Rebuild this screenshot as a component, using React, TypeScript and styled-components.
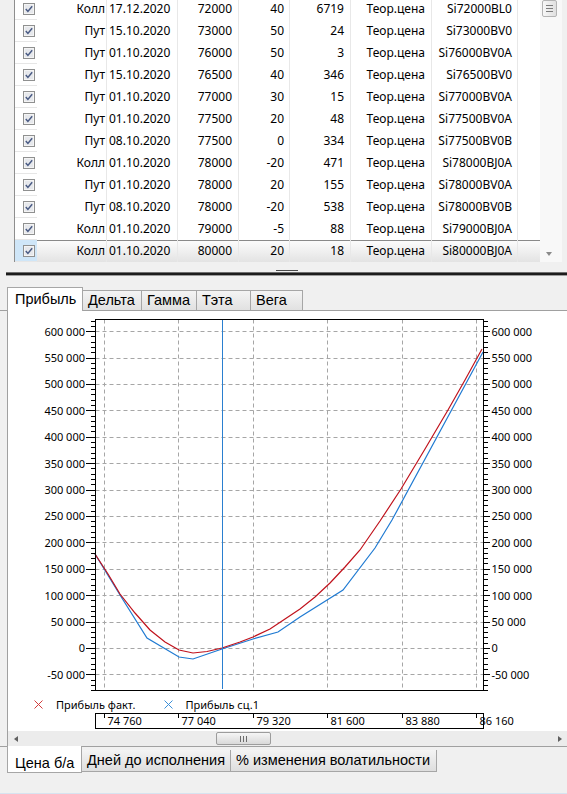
import React from "react";
import styled, { createGlobalStyle, css } from "styled-components";

type Leg = {
  kind: string;
  date: string;
  strike: number;
  qty: number;
  price: number;
  code: string;
};

const legs: Leg[] = [
  { kind: "Колл", date: "17.12.2020", strike: 72000, qty: 40, price: 6719, code: "Si72000BL0" },
  { kind: "Пут", date: "15.10.2020", strike: 73000, qty: 50, price: 24, code: "Si73000BV0" },
  { kind: "Пут", date: "01.10.2020", strike: 76000, qty: 50, price: 3, code: "Si76000BV0A" },
  { kind: "Пут", date: "15.10.2020", strike: 76500, qty: 40, price: 346, code: "Si76500BV0" },
  { kind: "Пут", date: "01.10.2020", strike: 77000, qty: 30, price: 15, code: "Si77000BV0A" },
  { kind: "Пут", date: "01.10.2020", strike: 77500, qty: 20, price: 48, code: "Si77500BV0A" },
  { kind: "Пут", date: "08.10.2020", strike: 77500, qty: 0, price: 334, code: "Si77500BV0B" },
  { kind: "Колл", date: "01.10.2020", strike: 78000, qty: -20, price: 471, code: "Si78000BJ0A" },
  { kind: "Пут", date: "01.10.2020", strike: 78000, qty: 20, price: 155, code: "Si78000BV0A" },
  { kind: "Пут", date: "08.10.2020", strike: 78000, qty: -20, price: 538, code: "Si78000BV0B" },
  { kind: "Колл", date: "01.10.2020", strike: 79000, qty: -5, price: 88, code: "Si79000BJ0A" },
  { kind: "Колл", date: "01.10.2020", strike: 80000, qty: 20, price: 18, code: "Si80000BJ0A" },
];
const SELECTED = 11;

const topTabs = [
  { label: "Прибыль", w: 76 },
  { label: "Дельта", w: 60 },
  { label: "Гамма", w: 56 },
  { label: "Тэта", w: 55 },
  { label: "Вега", w: 53 },
];

const bottomTabs = [
  { label: "Цена б/а", w: 75 },
  { label: "Дней до исполнения", w: 150 },
  { label: "% изменения волатильности", w: 207 },
];

// chart scales (page pixels)
const yOf = (v: number) => 648.4 - (v * 26.4) / 50000;
const xOf = (p: number) => 104.5 + ((p - 74760) * 74.45) / 2280;
const crisp = (n: number) => Math.floor(n) + 0.5;
const PLOT = { l: 95.5, r: 483.5, t: 319.5, b: 690.5 };

const fmt = (v: number) =>
  (v < 0 ? "-" : "") + String(Math.abs(v)).replace(/\B(?=(\d{3})+(?!\d))/g, " ");

const levels = Array.from({ length: 14 }, (_, i) => -50000 + i * 50000);
const ticks = Array.from({ length: 71 }, (_, i) => -80000 + i * 10000).filter(
  (v) => yOf(v) >= 319 && yOf(v) <= 691
);
const prices = Array.from({ length: 6 }, (_, i) => 74760 + i * 2280);

// traced from the plot
const factCurve =
  "95,554 108,574 120,594 135,613 150,630 165,642 179,650 193,653 207,651.5 222,648 240,642 253,637 270,629 285,619 300,609 315,597 330,583 345,567 360,550 380,521 401,489 425,449 448,410 465,380 482,349";
const scenarioCurve =
  "95,554 120,595 147,638 179,657 193,659 222,649 253,639 278,632 300,617 343,590 375,548 392,520 483,352";

const GlobalStyle = createGlobalStyle`
  html, body {
    margin: 0;
    padding: 0;
    background: #f0f0f0;
  }
  body {
    width: 567px;
    height: 794px;
    overflow: hidden;
    font-family: "Liberation Sans", Arial, sans-serif;
    color: #000;
  }
`;

const Window = styled.div`
  display: flex;
  flex-direction: column;
  width: 567px;
  height: 794px;
  overflow: hidden;
  background: #f0f0f0;
`;

const GridArea = styled.div`
  display: flex;
  height: 262px;
  padding-left: 14px;
`;

const Grid = styled.div`
  width: 525px;
  border-left: 1px solid #8e8e8e;
  background: #fff;
  overflow: hidden;
  font-family: "Noto Sans", "Liberation Sans", sans-serif;
  font-size: 12px;
`;

const Rows = styled.div`
  margin-top: -2px;
`;

const Row = styled.div<{ $selected?: boolean }>`
  display: grid;
  grid-template-columns: 22px 70px 71px 61px 51px 61px 81px 86px 22px;
  height: 22px;
  ${(p) =>
    p.$selected &&
    css`
      background: linear-gradient(#8a8a8a, #8a8a8a) top / 100% 1px no-repeat,
        linear-gradient(#fdfdfd, #e3e3e3);
    `}
`;

const CheckCell = styled.div<{ $selected?: boolean }>`
  display: flex;
  align-items: center;
  padding-left: 8px;
  box-sizing: border-box;
  border-bottom: 1px solid #e6e6e6;
  background: ${(p) => (p.$selected ? "#cfe6f8" : "#fff")};
`;

const Cell = styled.div<{ $left?: boolean; $pad?: number }>`
  display: flex;
  align-items: center;
  justify-content: ${(p) => (p.$left ? "flex-start" : "flex-end")};
  padding: ${(p) => (p.$left ? `0 0 0 ${p.$pad ?? 2}px` : `0 ${p.$pad ?? 6}px 0 0`)};
  border-right: 1px solid #e8e8e8;
  white-space: nowrap;
  line-height: 22px;
`;

const Filler = styled.div``;

const VScroll = styled.div`
  width: 22px;
  display: flex;
  flex-direction: column;
  align-items: flex-start;
  padding-left: 2px;
  box-sizing: border-box;
  background: #f8f8f8;
`;

const VThumb = styled.div`
  width: 15px;
  height: 17px;
  box-sizing: border-box;
  border: 1px solid #b4b4b4;
  border-radius: 2px;
  background: linear-gradient(90deg, #f7f7f7, #e0e0e0);
  display: flex;
  flex-direction: column;
  align-items: center;
  justify-content: center;
  gap: 2px;
`;

const HGripLine = styled.span`
  width: 7px;
  height: 1px;
  background: #7c7c7c;
`;

const DownArrow = styled.span`
  margin: auto 0 6px 4px;
  border-left: 3.5px solid transparent;
  border-right: 3.5px solid transparent;
  border-top: 4px solid #8a8a8a;
`;

const Splitter = styled.div`
  margin: 10px 0 11px 6px;
  height: 4px;
  background: linear-gradient(#6f6f6f 0 1px, #1c1c1c 1px 3px, #9c9c9c 3px 4px);
  display: flex;
  justify-content: center;
`;

const SplitterGrip = styled.span`
  width: 22px;
  height: 1px;
  margin-top: -2px;
  background: #4a4a4a;
`;

const TopTabStrip = styled.div`
  display: flex;
  align-items: flex-end;
  height: 23px;
  padding-left: 8px;
  border-bottom: 1px solid #a0a0a0;
  font-size: 14.5px;
`;

const TopTab = styled.div<{ $w: number; $active?: boolean }>`
  box-sizing: border-box;
  width: ${(p) => p.$w}px;
  height: 20px;
  margin-left: -1px;
  padding-left: 5px;
  border: 1px solid #a6a6a6;
  border-bottom: none;
  background: linear-gradient(#f4f4f4, #e1e1e1);
  line-height: 19px;
  white-space: nowrap;
  ${(p) =>
    p.$active &&
    css`
      position: relative;
      z-index: 1;
      height: 24px;
      margin-bottom: -1px;
      padding-left: 7px;
      background: #fff;
      line-height: 22px;
    `}
`;

const Panel = styled.div`
  margin-left: 7px;
  border-left: 1px solid #a0a0a0;
  background: #fff;
  display: flex;
  flex-direction: column;
`;

const ChartSvg = styled.svg`
  display: block;
`;

const Legend = styled.div`
  height: 15px;
  display: flex;
  align-items: center;
  gap: 28px;
  padding-left: 26px;
  font-family: "Noto Sans", "Liberation Sans", sans-serif;
  font-size: 11px;
`;

const LegendItem = styled.div`
  display: flex;
  align-items: center;
  gap: 13px;
`;

const HScroll = styled.div`
  height: 15px;
  display: flex;
  align-items: center;
  background: #ececec;
`;

const ArrowBtn = styled.div`
  width: 15px;
  height: 15px;
  display: flex;
  align-items: center;
  justify-content: center;
`;

const ArrowTip = styled.span<{ $dir: "left" | "right" }>`
  border-top: 3.5px solid transparent;
  border-bottom: 3.5px solid transparent;
  ${(p) =>
    p.$dir === "left"
      ? css`
          border-right: 4px solid #606060;
        `
      : css`
          border-left: 4px solid #606060;
        `}
`;

const HTrack = styled.div`
  flex: 1;
  height: 100%;
  display: flex;
  align-items: center;
`;

const HThumb = styled.div<{ $offset: number; $w: number }>`
  margin-left: ${(p) => p.$offset}px;
  width: ${(p) => p.$w}px;
  height: 13px;
  box-sizing: border-box;
  border: 1px solid #9c9c9c;
  border-radius: 2px;
  background: linear-gradient(#f5f5f5, #d9d9d9);
  display: flex;
  align-items: center;
  justify-content: center;
  gap: 2px;
`;

const VGripLine = styled.span`
  width: 1px;
  height: 6px;
  background: #6c6c6c;
`;

const BottomTabStrip = styled.div`
  display: flex;
  align-items: flex-start;
  padding-left: 8px;
  border-top: 1px solid #a0a0a0;
  font-size: 14.5px;
`;

const BottomTab = styled.div<{ $w: number; $active?: boolean }>`
  box-sizing: border-box;
  width: ${(p) => p.$w}px;
  height: 22px;
  margin: 3px 0 0 -1px;
  padding-left: 5px;
  border: 1px solid #a6a6a6;
  border-top: none;
  background: linear-gradient(#f4f4f4, #dedede);
  line-height: 21px;
  white-space: nowrap;
  ${(p) =>
    p.$active &&
    css`
      position: relative;
      z-index: 1;
      height: 27px;
      margin-top: -1px;
      padding: 7px 0 0 7px;
      background: #fff;
      line-height: 20px;
    `}
`;

const BottomEdge = styled.div`
  margin-top: auto;
  height: 1px;
  background: #d7e3f0;
`;

function Checkbox() {
  return (
    <svg width="12" height="12" viewBox="0 0 12 12">
      <rect x="0.5" y="0.5" width="11" height="11" fill="#f4f4f4" stroke="#8f9090" />
      <rect x="2" y="2" width="8" height="8" fill="#e6e8ec" />
      <path d="M2.8 6 L4.9 8.4 L9.2 3.3" fill="none" stroke="#4a5b84" strokeWidth="1.5" />
    </svg>
  );
}

function Cross({ color }: { color: string }) {
  return (
    <svg width="9" height="9" viewBox="0 0 9 9">
      <path d="M0.5 0.5 L8.5 8.5 M8.5 0.5 L0.5 8.5" stroke={color} strokeWidth="1" />
    </svg>
  );
}

function ProfitPlot() {
  return (
    <ChartSvg width={559} height={386} viewBox="8 311 559 386">
      {levels.map((v) => (
        <line
          key={v}
          x1={PLOT.l}
          x2={PLOT.r}
          y1={crisp(yOf(v))}
          y2={crisp(yOf(v))}
          stroke="#a6a6a6"
          strokeDasharray="4 3"
        />
      ))}
      {prices.map((p) => (
        <line
          key={p}
          x1={crisp(xOf(p))}
          x2={crisp(xOf(p))}
          y1={PLOT.t}
          y2={PLOT.b}
          stroke="#a6a6a6"
          strokeDasharray="4 3"
        />
      ))}
      <polyline points={scenarioCurve} fill="none" stroke="#1f7ad2" strokeWidth={1.2} />
      <polyline points={factCurve} fill="none" stroke="#c0121c" strokeWidth={1.2} />
      <line x1={222.5} x2={222.5} y1={PLOT.t} y2={689} stroke="#2a7fd0" />
      <rect
        x={PLOT.l}
        y={PLOT.t}
        width={PLOT.r - PLOT.l}
        height={PLOT.b - PLOT.t}
        fill="none"
        stroke="#000"
      />
      {ticks.map((v) => {
        const y = crisp(yOf(v));
        const major = v % 50000 === 0;
        return (
          <g key={v} stroke="#000">
            <line x1={major ? 86 : 91} x2={PLOT.l} y1={y} y2={y} />
            <line x1={PLOT.r} x2={major ? 490 : 488} y1={y} y2={y} />
          </g>
        );
      })}
      <g fontFamily='"Noto Sans", "Liberation Sans", sans-serif' fontSize={11} fill="#000">
        {levels.map((v) => (
          <React.Fragment key={v}>
            <text x={85} y={yOf(v) + 4} textAnchor="end">
              {fmt(v)}
            </text>
            <text x={491.5} y={yOf(v) + 4}>
              {fmt(v)}
            </text>
          </React.Fragment>
        ))}
      </g>
    </ChartSvg>
  );
}

function PriceAxis() {
  return (
    <ChartSvg width={559} height={19} viewBox="8 712 559 19">
      <rect x={95.5} y={713.5} width={388} height={15} fill="#fff" stroke="#000" />
      <g fontFamily='"Noto Sans", "Liberation Sans", sans-serif' fontSize={11} fill="#000">
        {prices.map((p) => {
          const x = crisp(xOf(p));
          return (
            <g key={p}>
              <line x1={x} x2={x} y1={713.5} y2={718} stroke="#000" />
              <text x={x + 3} y={725}>
                {fmt(p)}
              </text>
            </g>
          );
        })}
      </g>
    </ChartSvg>
  );
}

export default function App() {
  return (
    <Window>
      <GlobalStyle />
      <GridArea>
        <Grid>
          <Rows>
            {legs.map((r, i) => (
              <Row key={i} $selected={i === SELECTED}>
                <CheckCell $selected={i === SELECTED}>
                  <Checkbox />
                </CheckCell>
                <Cell $pad={1}>{r.kind}</Cell>
                <Cell $left $pad={2}>
                  {r.date}
                </Cell>
                <Cell>{r.strike}</Cell>
                <Cell $pad={5}>{r.qty}</Cell>
                <Cell>{r.price}</Cell>
                <Cell>Теор.цена</Cell>
                <Cell $pad={5}>{r.code}</Cell>
                <Filler />
              </Row>
            ))}
          </Rows>
        </Grid>
        <VScroll>
          <VThumb>
            <HGripLine />
            <HGripLine />
            <HGripLine />
          </VThumb>
          <DownArrow />
        </VScroll>
      </GridArea>

      <Splitter>
        <SplitterGrip />
      </Splitter>

      <TopTabStrip>
        {topTabs.map((t, i) => (
          <TopTab key={t.label} $w={t.w} $active={i === 0}>
            {t.label}
          </TopTab>
        ))}
      </TopTabStrip>

      <Panel>
        <ProfitPlot />
        <Legend>
          <LegendItem>
            <Cross color="#d23a3a" />
            Прибыль факт.
          </LegendItem>
          <LegendItem>
            <Cross color="#3a8fd8" />
            Прибыль сц.1
          </LegendItem>
        </Legend>
        <PriceAxis />
        <HScroll>
          <ArrowBtn>
            <ArrowTip $dir="left" />
          </ArrowBtn>
          <HTrack>
            <HThumb $offset={193} $w={55}>
              <VGripLine />
              <VGripLine />
              <VGripLine />
            </HThumb>
          </HTrack>
          <ArrowBtn>
            <ArrowTip $dir="right" />
          </ArrowBtn>
        </HScroll>
      </Panel>

      <BottomTabStrip>
        {bottomTabs.map((t, i) => (
          <BottomTab key={t.label} $w={t.w} $active={i === 0}>
            {t.label}
          </BottomTab>
        ))}
      </BottomTabStrip>
      <BottomEdge />
    </Window>
  );
}
